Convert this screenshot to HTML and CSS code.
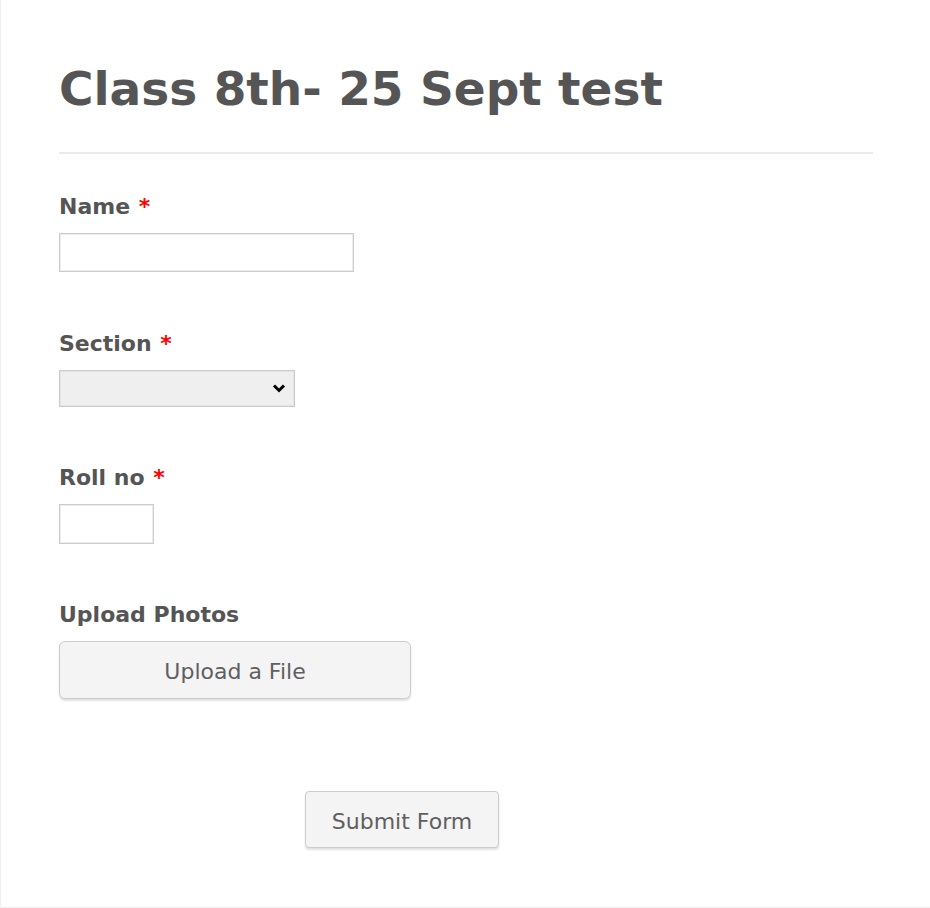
FILE: index.html
```html
<!DOCTYPE html>
<html lang="en">
<head>
    <meta charset="UTF-8">
    <meta name="viewport" content="width=device-width, initial-scale=1.0">
    <title>Class 8th- 25 Sept test</title>
    <link rel="stylesheet" href="styles.css">
</head>
<body>
    <div class="page">
        <form class="form">
            <h1 class="form-title">Class 8th- 25 Sept test</h1>
            <hr class="divider">

            <div class="field">
                <label class="field-label" for="name">Name <span class="required">*</span></label>
                <input type="text" id="name" class="text-input name-input">
            </div>

            <div class="field field-section">
                <label class="field-label" for="section">Section <span class="required">*</span></label>
                <div class="select-wrap">
                    <select id="section" class="select-input">
                        <option></option>
                    </select>
                    <svg class="select-arrow" width="14" height="10" viewBox="0 0 14 10">
                        <path d="M2 2.5 L7 7.5 L12 2.5" fill="none" stroke="#000" stroke-width="3"/>
                    </svg>
                </div>
            </div>

            <div class="field">
                <label class="field-label" for="roll">Roll no <span class="required">*</span></label>
                <input type="text" id="roll" class="text-input roll-input">
            </div>

            <div class="field">
                <label class="field-label">Upload Photos</label>
                <button type="button" class="btn upload-btn">Upload a File</button>
            </div>

            <div class="submit-row">
                <button type="submit" class="btn submit-btn">Submit Form</button>
            </div>
        </form>
    </div>
</body>
</html>
```

FILE: styles.css
```css
body {
    margin: 0;
    font-family: "DejaVu Sans", Verdana, sans-serif;
    color: #555;
    background: #fff;
}
.page {
    height: 908px;
    box-sizing: border-box;
    border-left: 1px solid #f0f0f0;
    border-bottom: 1px solid #f0f0f0;
    overflow: hidden;
}
.form {
    padding: 61px 57px 0 58px;
}
.form-title {
    margin: 0;
    font-size: 47px;
    line-height: 56px;
    font-weight: bold;
    color: #555;
}
.divider {
    margin: 35px 0 0 0;
    border: none;
    border-top: 2px solid #ebebeb;
}
.field {
    margin-top: 38px;
}
.field + .field {
    margin-top: 56px;
}
.field + .field-section {
    margin-top: 57px;
}
.field-label {
    display: block;
    font-size: 22px;
    line-height: 30px;
    font-weight: bold;
    margin-bottom: 11px;
}
.required {
    margin-left: 1px;
    color: #f00;
}
.text-input {
    display: block;
    box-sizing: border-box;
    margin: 0;
    border: 1px solid #ccc;
    box-shadow: inset 0 0 0 1px #ececec;
    background: #fff;
    font-size: 20px;
    font-family: inherit;
}
.name-input {
    width: 295px;
    height: 39px;
}
.roll-input {
    width: 95px;
    height: 40px;
}
.select-wrap {
    position: relative;
    width: 236px;
}
.select-input {
    display: block;
    box-sizing: border-box;
    margin: 0;
    width: 236px;
    height: 37px;
    padding: 0 30px 0 6px;
    border: 1px solid #ccc;
    box-shadow: inset 0 0 0 1px #e4e4e4;
    background: #efefef;
    font-size: 18px;
    font-family: inherit;
    color: #000;
    appearance: none;
    -webkit-appearance: none;
    border-radius: 0;
}
.select-arrow {
    position: absolute;
    right: 9px;
    top: 13px;
    pointer-events: none;
}
.btn {
    display: block;
    box-sizing: border-box;
    border: 1px solid #ccc;
    border-radius: 6px;
    background: #f4f4f4;
    box-shadow: 0 2px 2px rgba(0, 0, 0, 0.12);
    color: #5f5f5f;
    font-family: inherit;
    font-size: 22px;
    cursor: pointer;
}
.upload-btn {
    width: 352px;
    height: 58px;
    padding-top: 4px;
}
.submit-row {
    margin-top: 92px;
    padding-left: 246px;
}
.submit-btn {
    width: 194px;
    height: 57px;
    padding-top: 5px;
    border-radius: 4px;
}
```
